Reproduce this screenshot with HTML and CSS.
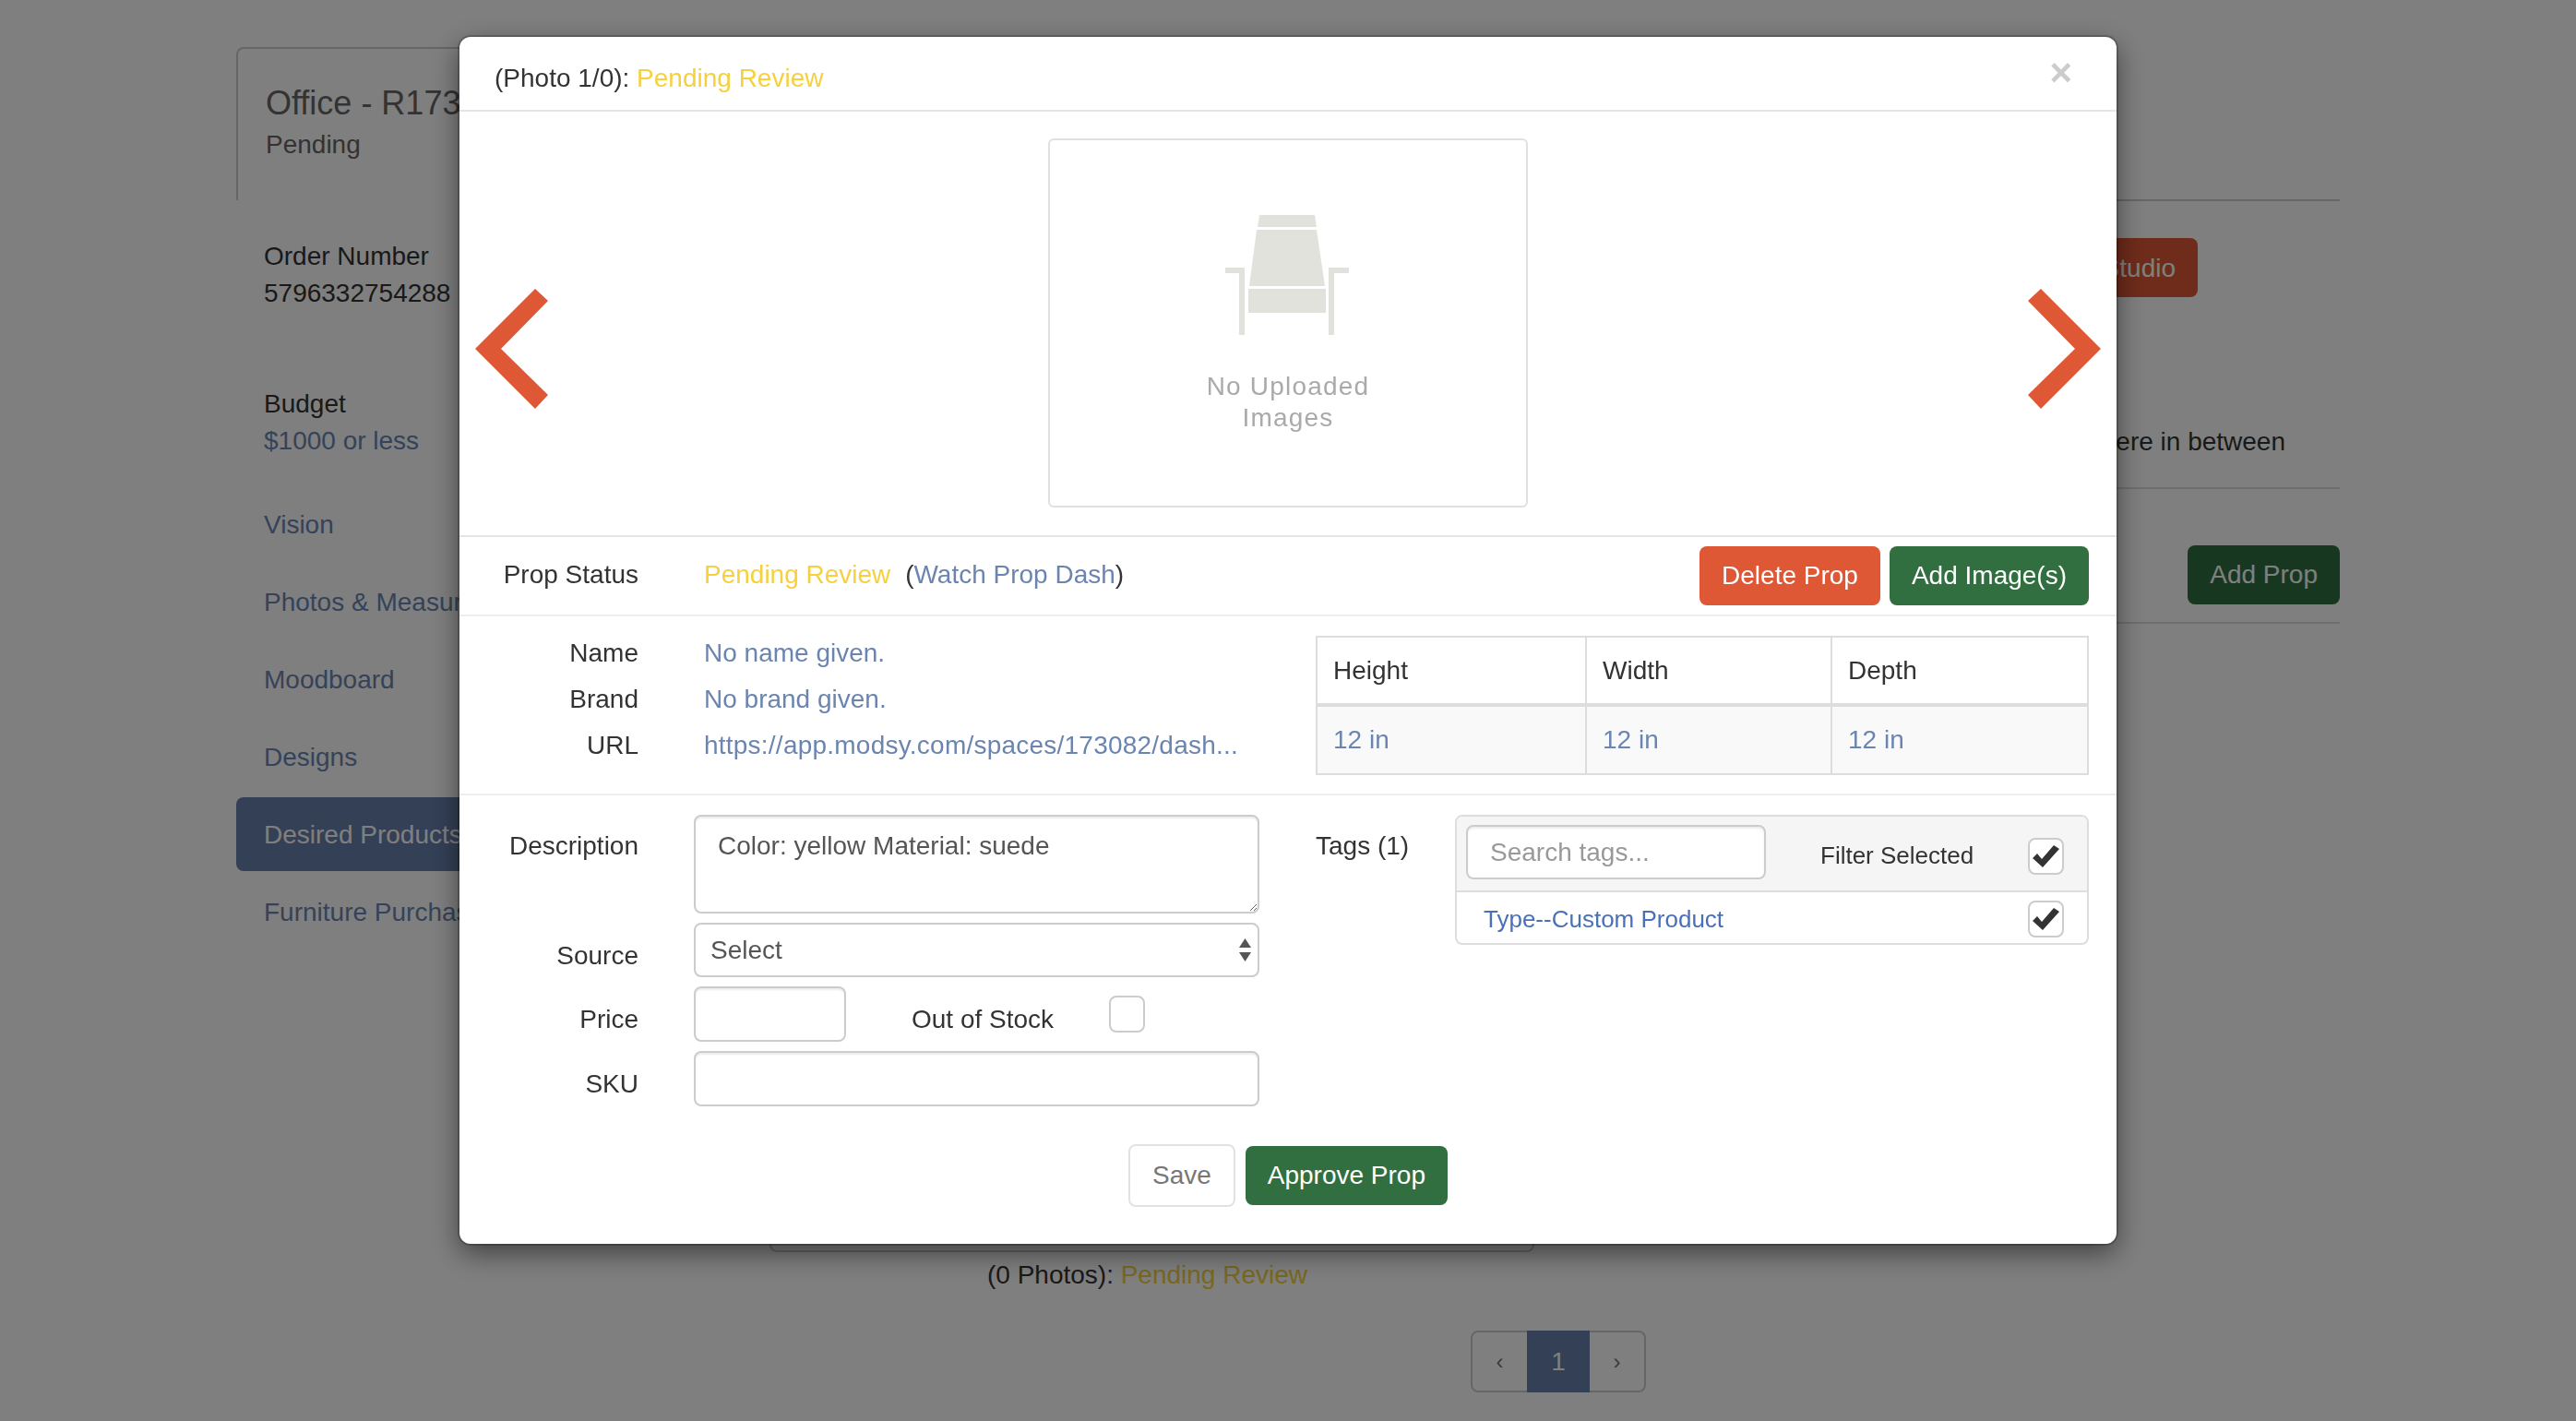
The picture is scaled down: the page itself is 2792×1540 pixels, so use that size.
FILE: index.html
```html
<!DOCTYPE html>
<html lang="en">
<head>
    <meta charset="UTF-8">
    <title>Desired Products</title>
    <link rel="stylesheet" href="styles.css">
</head>
<body>
    <div class="page">
        <div class="sidebar">
            <div class="space-tab">
                <h2>Office - R173082</h2>
                <p>Pending</p>
            </div>
            <div class="side-block order-block">
                <div>Order Number</div>
                <div>5796332754288</div>
            </div>
            <div class="side-block budget-block">
                <div>Budget</div>
                <a href="#">$1000 or less</a>
            </div>
            <ul class="side-nav">
                <li><a href="#">Vision</a></li>
                <li><a href="#">Photos &amp; Measurements</a></li>
                <li><a href="#">Moodboard</a></li>
                <li><a href="#">Designs</a></li>
                <li class="active"><a href="#">Desired Products</a></li>
                <li><a href="#">Furniture Purchases</a></li>
            </ul>
        </div>
        <div class="main">
            <div class="main-head"></div>
            <div class="studio-row"><a class="btn btn-red" href="#">Open in Studio</a></div>
            <div class="style-row">Somewhere in between</div>
            <div class="add-row"><a class="btn btn-green" href="#">Add Prop</a></div>
            <div class="prop-card"></div>
            <p class="prop-caption">(0 Photos): <span class="pending">Pending Review</span></p>
            <ul class="pager">
                <li>‹</li>
                <li class="active">1</li>
                <li>›</li>
            </ul>
        </div>
    </div>

    <div class="overlay">
        <div class="modal">
            <div class="modal-head">
                <div>(Photo 1/0): <span class="pending-bright">Pending Review</span></div>
                <span class="close">×</span>
            </div>

            <div class="viewer">
                <svg class="arrow" width="79" height="130" viewBox="0 0 79 130"><polygon points="0,65 65,0 79,13 28,65 79,115 65,130" /></svg>
                <div class="photo-box">
                    <svg class="chair" width="134" height="130" viewBox="0 0 134 130">
                        <polygon points="37,0 97,0 99,13 35,13" />
                        <polygon points="34,16 99,16 108,77 26,77" />
                        <rect x="25" y="80" width="84" height="26" />
                        <polygon points="0,57 21,57 21,130 15,130 15,63 0,63" />
                        <polygon points="112,57 134,57 134,63 118,63 118,130 112,130" />
                    </svg>
                    <div class="no-images">No Uploaded<br>Images</div>
                </div>
                <svg class="arrow arrow-next" width="79" height="130" viewBox="0 0 79 130"><polygon points="79,65 14,0 0,13 51,65 0,115 14,130" /></svg>
            </div>

            <div class="status-row">
                <label class="field-label">Prop Status</label>
                <div class="status-value">
                    <span class="pending-bright">Pending Review</span>
                    <span class="watch">(<a href="#">Watch Prop Dash</a>)</span>
                </div>
                <div class="status-actions">
                    <a class="btn btn-red" href="#">Delete Prop</a>
                    <a class="btn btn-green" href="#">Add Image(s)</a>
                </div>
            </div>

            <div class="info-row">
                <div class="info-list">
                    <div class="info-item"><label class="field-label">Name</label><a href="#">No name given.</a></div>
                    <div class="info-item"><label class="field-label">Brand</label><a href="#">No brand given.</a></div>
                    <div class="info-item"><label class="field-label">URL</label><a class="url-link" href="#">https://app.modsy.com/spaces/173082/dash...</a></div>
                </div>
                <table class="dims">
                    <thead>
                        <tr><th class="col-h">Height</th><th class="col-w">Width</th><th>Depth</th></tr>
                    </thead>
                    <tbody>
                        <tr><td><a href="#">12 in</a></td><td><a href="#">12 in</a></td><td><a href="#">12 in</a></td></tr>
                    </tbody>
                </table>
            </div>

            <div class="details">
                <div class="detail-form">
                    <div class="form-row">
                        <label class="field-label desc-label">Description</label>
                        <textarea class="control desc">Color: yellow Material: suede</textarea>
                    </div>
                    <div class="form-row">
                        <label class="field-label">Source</label>
                        <div class="select-wrap">
                            <select class="control source"><option>Select</option></select>
                            <svg class="select-arrows" width="13" height="25" viewBox="0 0 13 25"><polygon points="6.5,0 13,10 0,10" /><polygon points="0,15 13,15 6.5,25" /></svg>
                        </div>
                    </div>
                    <div class="form-row">
                        <label class="field-label">Price</label>
                        <input class="control price" type="text">
                        <span class="stock-label">Out of Stock</span>
                        <span class="checkbox stock-box"></span>
                    </div>
                    <div class="form-row">
                        <label class="field-label">SKU</label>
                        <input class="control sku" type="text">
                    </div>
                </div>
                <div class="tags-label">Tags (1)</div>
                <div class="tags-panel">
                    <div class="tags-head">
                        <input class="control tag-search" type="text" placeholder="Search tags...">
                        <span class="filter-label">Filter Selected</span>
                        <span class="checkbox">
                            <svg width="29" height="24" viewBox="0 0 29 24"><polygon points="0,14 5,9 10,15 23,0 29,4 11,24" /></svg>
                        </span>
                    </div>
                    <div class="tag-row">
                        <a href="#">Type--Custom Product</a>
                        <span class="checkbox">
                            <svg width="29" height="24" viewBox="0 0 29 24"><polygon points="0,14 5,9 10,15 23,0 29,4 11,24" /></svg>
                        </span>
                    </div>
                </div>
            </div>

            <div class="modal-foot">
                <a class="btn btn-plain" href="#">Save</a>
                <a class="btn btn-green" href="#">Approve Prop</a>
            </div>
        </div>
    </div>
</body>
</html>
```

FILE: styles.css
```css
* {
    box-sizing: border-box;
}
html, body {
    height: 1540px;
    overflow: hidden;
}
body {
    margin: 0;
    font-family: "Liberation Sans", Arial, sans-serif;
    font-size: 28px;
    line-height: 40px;
    color: #333;
    background-color: #fff;
}
a {
    color: #6b85b0;
    text-decoration: none;
}
ul {
    margin: 0;
    padding: 0;
    list-style: none;
}
p {
    margin: 0;
}

.btn {
    display: inline-block;
    height: 64px;
    padding: 0 24px;
    border-radius: 8px;
    line-height: 64px;
    text-align: center;
    color: #fff;
}
.btn-red {
    background-color: #de5836;
}
.btn-green {
    background-color: #316f41;
}
.btn-plain {
    height: 68px;
    padding: 0 24px;
    border: 2px solid #e2e2e2;
    line-height: 64px;
    color: #777;
    background-color: #fff;
}

/* page behind the modal */
.page {
    display: flex;
    padding: 51px 256px 0;
}
.sidebar {
    width: 480px;
}
.space-tab {
    height: 166px;
    padding: 36px 0 0 30px;
    border: 2px solid #ccc;
    border-bottom: none;
    border-radius: 8px 8px 0 0;
    color: #666;
}
.space-tab h2 {
    margin: 0;
    font-size: 36px;
    font-weight: normal;
    line-height: 46px;
    white-space: nowrap;
}
.space-tab p {
    line-height: 44px;
}
.side-block {
    padding-left: 30px;
}
.order-block {
    margin-top: 41px;
}
.budget-block {
    margin-top: 80px;
}
.budget-block a {
    display: block;
}
.side-nav {
    margin-top: 30px;
}
.side-nav li {
    height: 80px;
    margin-bottom: 4px;
    padding-left: 30px;
    border-radius: 8px;
    line-height: 82px;
    white-space: nowrap;
}
.side-nav .active {
    background-color: #6880ad;
}
.side-nav .active a {
    color: #fff;
}
.main {
    width: 1800px;
}
.main-head {
    height: 167px;
    border-bottom: 2px solid #ccc;
}
.studio-row {
    display: flex;
    justify-content: flex-end;
    margin-top: 40px;
    padding-right: 154px;
}
.studio-row .btn {
    line-height: 66px;
}
.style-row {
    height: 208px;
    padding: 137px 59px 0 0;
    border-bottom: 2px solid #ddd;
    text-align: right;
}
.add-row {
    display: flex;
    justify-content: flex-end;
    height: 146px;
    padding-top: 61px;
    border-bottom: 2px solid #ddd;
}
.prop-card {
    width: 829px;
    height: 681px;
    margin-left: 98px;
    border: 2px solid #ccc;
    border-top: none;
    border-radius: 0 0 8px 8px;
}
.prop-caption {
    width: 819px;
    margin: 5px 0 0 98px;
    text-align: center;
}
.pending {
    color: #f0d040;
}
.pager {
    display: flex;
    width: 190px;
    height: 67px;
    margin: 40px 0 0 858px;
    border: 2px solid #ccc;
    border-radius: 8px;
    font-size: 24px;
    line-height: 63px;
    color: #777;
    text-align: center;
}
.pager li {
    flex: 1;
}
.pager .active {
    flex: none;
    width: 68px;
    height: 67px;
    margin-top: -2px;
    line-height: 67px;
    font-size: 28px;
    color: #fff;
    background-color: #6880ad;
}

/* modal */
.overlay {
    position: fixed;
    top: 0;
    left: 0;
    right: 0;
    bottom: 0;
    padding-top: 40px;
    background-color: rgba(0, 0, 0, 0.5);
}
.modal {
    width: 1796px;
    margin: 0 auto;
    padding-bottom: 40px;
    border-radius: 12px;
    background-color: #fff;
    box-shadow: 0 0 0 2px rgba(0, 0, 0, 0.2), 0 10px 30px rgba(0, 0, 0, 0.5);
}
.modal-head {
    display: flex;
    justify-content: space-between;
    height: 81px;
    padding: 25px 48px 0 38px;
    border-bottom: 2px solid #e5e5e5;
}
.pending-bright {
    color: #f6d03e;
}
.close {
    margin-top: -6px;
    font-size: 42px;
    font-weight: bold;
    color: #ccc;
}
.viewer {
    display: flex;
    justify-content: space-between;
    height: 461px;
    padding: 29px 17px 0;
    border-bottom: 2px solid #e5e5e5;
}
.arrow {
    margin-top: 163px;
    fill: #de5836;
}
.photo-box {
    display: flex;
    flex-direction: column;
    align-items: center;
    width: 520px;
    height: 400px;
    padding-top: 81px;
    border: 2px solid #e0e0e0;
    border-radius: 6px;
}
.chair {
    margin-left: -2px;
    fill: #e2e2dd;
}
.no-images {
    margin-top: 39px;
    font-size: 28px;
    line-height: 34px;
    letter-spacing: 1.2px;
    text-align: center;
    color: #aaa;
}
.field-label {
    flex: none;
    display: block;
    width: 194px;
    text-align: right;
}
.status-row {
    display: flex;
    align-items: center;
    height: 86px;
    padding-right: 30px;
    border-bottom: 2px solid #eee;
}
.status-row .field-label {
    margin-bottom: 3px;
}
.status-value {
    margin: 0 0 3px 71px;
}
.watch {
    margin-left: 8px;
}
.status-actions {
    display: flex;
    gap: 10px;
    margin-left: auto;
}
.info-row {
    display: flex;
    justify-content: space-between;
    height: 194px;
    padding: 15px 30px 0 0;
    border-bottom: 2px solid #eee;
}
.info-item {
    display: flex;
    height: 50px;
    line-height: 50px;
}
.info-item a {
    margin-left: 71px;
    white-space: nowrap;
}
.url-link {
    letter-spacing: 0.23px;
}
.dims {
    width: 838px;
    height: 151px;
    margin-top: 6px;
    border-collapse: collapse;
    table-layout: fixed;
    border: 2px solid #ddd;
}
.dims th, .dims td {
    padding: 0 0 0 17px;
    border: 2px solid #ddd;
    font-weight: normal;
    text-align: left;
}
.dims th {
    height: 74px;
    border-bottom-width: 4px;
}
.dims td {
    background-color: #f9f9f9;
}
.col-h {
    width: 292px;
}
.col-w {
    width: 266px;
}
.details {
    display: flex;
    padding: 21px 30px 0 0;
}
.detail-form {
    flex: none;
    width: 867px;
}
.form-row {
    display: flex;
    align-items: flex-start;
    margin-bottom: 10px;
}
.form-row .field-label {
    margin: 16px 60px 0 0;
}
.form-row .desc-label {
    margin-top: 14px;
}
.control {
    display: block;
    border: 2px solid #ccc;
    border-radius: 8px;
    font-family: "Liberation Sans", Arial, sans-serif;
    font-size: 28px;
    color: #555;
    background-color: #fff;
    box-shadow: inset 0 2px 2px rgba(0, 0, 0, 0.075);
    outline: none;
}
.desc {
    width: 613px;
    height: 107px;
    padding: 12px 24px;
    line-height: 40px;
}
.select-wrap {
    position: relative;
}
.source {
    width: 613px;
    height: 59px;
    padding: 0 16px;
    appearance: none;
    box-shadow: none;
}
.select-arrows {
    position: absolute;
    top: 17px;
    right: 9px;
    fill: #555;
}
.price {
    width: 165px;
    height: 60px;
}
.stock-label {
    width: 214px;
    margin: 16px 0 0 71px;
}
.sku {
    width: 613px;
    height: 60px;
}
.checkbox {
    display: flex;
    flex: none;
    align-items: center;
    justify-content: center;
    width: 39px;
    height: 40px;
    border: 2px solid #ccc;
    border-radius: 8px;
    background-color: #fff;
    fill: #333;
}
.stock-box {
    margin-top: 10px;
}
.tags-label {
    width: 151px;
    margin: 14px 0 0 61px;
}
.tags-panel {
    width: 687px;
    height: 141px;
    border: 2px solid #ddd;
    border-radius: 8px;
    font-size: 26px;
}
.tags-head {
    display: flex;
    align-items: center;
    height: 82px;
    padding: 0 25px 0 10px;
    border-bottom: 2px solid #ddd;
    background-color: #f5f5f5;
    border-radius: 6px 6px 0 0;
}
.tag-search {
    width: 325px;
    height: 59px;
    padding: 2px 24px 0;
    margin-top: -4px;
}
.tag-search::placeholder {
    color: #999;
}
.filter-label {
    margin-left: 59px;
    margin-top: 3px;
}
.tags-head .checkbox {
    margin: 6px 0 0 auto;
}
.tag-row {
    display: flex;
    align-items: center;
    justify-content: space-between;
    height: 55px;
    padding: 3px 25px 0 29px;
}
.tag-row a {
    color: #4a70b8;
}
.modal-foot {
    display: flex;
    justify-content: center;
    align-items: center;
    gap: 11px;
    height: 68px;
    margin-top: 31px;
}
```
